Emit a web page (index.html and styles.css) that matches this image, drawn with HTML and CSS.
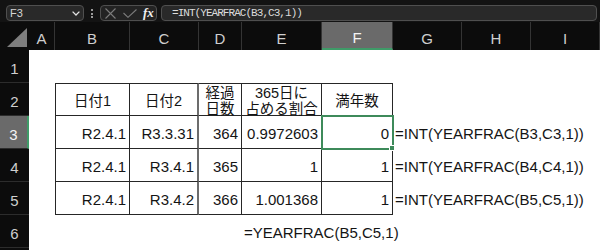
FILE: index.html
```
<!DOCTYPE html>
<html lang="ja">
  <head>
    <meta charset="UTF-8" />
    <meta name="viewport" content="width=device-width, initial-scale=1.0" />
    <title>YEARFRAC 満年数</title>
    <link rel="stylesheet" href="styles.css">
  </head>
  <body>
    <!-- 数式バー -->
    <div class="formula-bar">
      <div class="name-box">
        <span>F3</span>
        <svg class="chevron" width="8" height="5" viewBox="0 0 8 5">
          <path d="M0.6 0.6 L4 4 L7.4 0.6" fill="none" stroke="#e2e2e2" stroke-width="1.3" />
        </svg>
      </div>
      <div class="grip"><i></i><i></i><i></i></div>
      <div class="buttons">
        <svg class="cancel" width="11" height="11" viewBox="0 0 11 11">
          <path d="M0.5 0.5 L10.5 10.5 M10.5 0.5 L0.5 10.5" stroke="#7c7c7c" stroke-width="1.1" />
        </svg>
        <svg class="enter" width="14" height="9" viewBox="0 0 14 9">
          <path d="M0.5 4 L5 8.3 L13.5 0.5" fill="none" stroke="#7c7c7c" stroke-width="1.1" />
        </svg>
        <span class="fx">fx</span>
      </div>
      <div class="formula">=INT(YEARFRAC(B3,C3,1))</div>
    </div>

    <!-- シート -->
    <div class="sheet" id="sheet"></div>

    <script>
      const columns = ['A', 'B', 'C', 'D', 'E', 'F', 'G', 'H', 'I'];
      const activeCol = 5;
      const activeRow = 3;

      const rows = [
        [],
        ['', '日付1', '日付2', '経過<br>日数', '365日に<br>占める割合', '満年数'],
        ['', 'R2.4.1', 'R3.3.31', '364', '0.9972603', '0', '=INT(YEARFRAC(B3,C3,1))'],
        ['', 'R2.4.1', 'R3.4.1', '365', '1', '1', '=INT(YEARFRAC(B4,C4,1))'],
        ['', 'R2.4.1', 'R3.4.2', '366', '1.001368', '1', '=INT(YEARFRAC(B5,C5,1))'],
        ['', '', '', '', '=YEARFRAC(B5,C5,1)'],
      ];

      const sheet = document.getElementById('sheet');

      const corner = document.createElement('div');
      corner.className = 'corner';
      corner.innerHTML = `<svg width="29" height="28" viewBox="0 0 29 28"><polygon points="7,25 27,25 27,6" fill="#7e7e7e" /></svg>`;
      sheet.appendChild(corner);

      columns.forEach((name, i) => {
        const head = document.createElement('div');
        head.className = 'col-head' + (i === activeCol ? ' active' : '');
        head.textContent = name;
        sheet.appendChild(head);
      });

      rows.forEach((values, r) => {
        const rowNo = r + 1;
        const head = document.createElement('div');
        head.className = 'row-head' + (rowNo === activeRow ? ' active' : '');
        head.textContent = rowNo;
        sheet.appendChild(head);

        columns.forEach((name, c) => {
          const value = values[c] || '';
          const cell = document.createElement('div');
          cell.classList.add('cell');

          const inTable = rowNo >= 2 && rowNo <= 5 && c >= 1 && c <= 5;
          if (inTable) {
            cell.classList.add('box', rowNo === 2 ? 'head' : 'num');
            if (c === 1) cell.classList.add('first');
            if (c === 2) cell.classList.add('split');
            if (rowNo === 2) cell.classList.add('top');
          } else if (value) {
            cell.classList.add('text');
          }
          if (rowNo === activeRow && c === activeCol) cell.classList.add('active-cell');

          cell.innerHTML = rowNo === 2 && inTable ? `<span>${value}</span>` : value;
          sheet.appendChild(cell);
        });
      });

      // 7行目は見出しだけ少し見える
      const tail = document.createElement('div');
      tail.className = 'row-head tail';
      sheet.appendChild(tail);
    </script>
  </body>
</html>
```

FILE: styles.css
```
body {
  margin: 0;
  width: 600px;
  height: 250px;
  overflow: hidden;
  background-color: #fff;
  font-family: "Liberation Sans", "Noto Sans CJK JP", sans-serif;
}

/* 数式バー */
.formula-bar {
  display: flex;
  align-items: flex-start;
  height: 22px;
  box-sizing: border-box;
  padding: 5px 0 0 6px;
  background-color: #131313;
}

.name-box,
.buttons,
.formula {
  height: 16px;
  box-sizing: border-box;
  border: 1px solid #4f4f4f;
  border-radius: 4px;
  background-color: #292929;
}

.name-box {
  width: 78px;
  display: flex;
  align-items: center;
  justify-content: space-between;
  padding: 0 3px 0 3px;
  color: #d6d6d6;
  font-size: 11px;
}

.grip {
  width: 16px;
  display: flex;
  flex-direction: column;
  align-items: center;
  gap: 1.5px;
  padding-top: 4px;
}

.grip i {
  display: block;
  width: 2px;
  height: 2px;
  background-color: #9a9a9a;
}

.buttons {
  width: 57px;
  display: flex;
  align-items: center;
  padding-left: 4px;
  background-color: #232323;
}

.enter {
  margin-left: 7px;
}

.fx {
  margin-left: 6px;
  color: #f0f0f0;
  font-family: "Liberation Serif", serif;
  font-style: italic;
  font-weight: bold;
  font-size: 13px;
  line-height: 14px;
}

.formula {
  flex: 1;
  margin: 0 3px 0 4px;
  padding-left: 10px;
  color: #dcdcdc;
  font-family: "Liberation Mono", monospace;
  font-size: 11px;
  letter-spacing: -0.95px;
  line-height: 14px;
  white-space: nowrap;
}

/* シート */
.sheet {
  display: grid;
  grid-template-columns: 29px 26px 75px 69px 43px 80px 71px 69px 69px 69px;
  grid-template-rows: 28px repeat(6, 33px) 10px;
}

.corner {
  background-color: #0c0c0c;
}

.corner svg {
  display: block;
}

.col-head,
.row-head {
  display: flex;
  align-items: center;
  justify-content: center;
  box-sizing: border-box;
  background-color: #0c0c0c;
  color: #cfcfcf;
  font-size: 15px;
}

.col-head {
  padding-top: 4px;
  border-right: 1px solid #343434;
}

.col-head.active {
  background-color: #6a6a6a;
  border-bottom: 2px solid #3f9b68;
  color: #f4f4f4;
}

.row-head {
  padding-top: 5px;
  border-bottom: 1px solid #2c2c2c;
}

.row-head.active {
  background-color: #6a6a6a;
  border-right: 2px solid #3f9b68;
  color: #f4f4f4;
}

.row-head.tail {
  border-bottom: none;
}

.cell {
  box-sizing: border-box;
  min-width: 0;
  white-space: nowrap;
  color: #141414;
  font-size: 15px;
}

.box {
  border-right: 1px solid #262626;
  border-bottom: 1px solid #262626;
}

.box.first {
  border-left: 1px solid #262626;
}

.box.top {
  border-top: 1px solid #262626;
}

.box.split {
  border-right: 2px solid #6c6c6c;
}

.num {
  text-align: right;
  padding: 4px 3px 0 0;
  line-height: 28px;
}

.head {
  display: flex;
  align-items: center;
  justify-content: center;
  text-align: center;
  padding-top: 3px;
  font-size: 14.5px;
  line-height: 16px;
}

.text {
  padding: 4px 0 0 2px;
  line-height: 28px;
}

.active-cell {
  position: relative;
  z-index: 1;
  outline: 2px solid #3d8a5a;
  outline-offset: -1px;
}

.active-cell::after {
  content: "";
  position: absolute;
  right: -3px;
  bottom: -3px;
  width: 4px;
  height: 4px;
  background-color: #3d8a5a;
  border: 1px solid #fff;
}
```
